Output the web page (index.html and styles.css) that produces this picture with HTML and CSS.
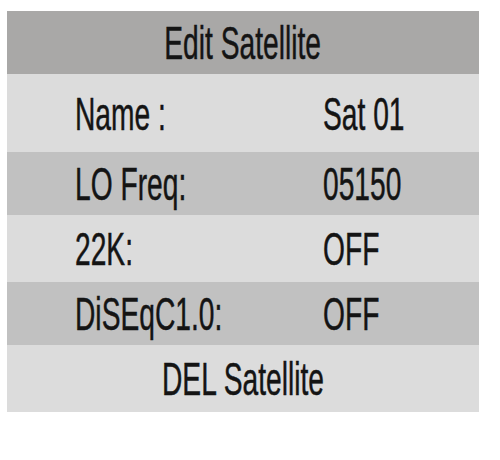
FILE: index.html
```html
<!DOCTYPE html>
<html lang="en">
<head>
    <meta charset="UTF-8" />
    <title>Edit Satellite</title>
    <link rel="stylesheet" href="styles.css">
</head>
<body>
<div class="panel">
    <div class="title"><span class="txt">Edit Satellite</span></div>
    <div class="row light tall">
        <div class="label"><span class="txt">Name :</span></div>
        <div class="value"><span class="txt">Sat 01</span></div>
    </div>
    <div class="row dark">
        <div class="label"><span class="txt">LO Freq:</span></div>
        <div class="value"><span class="txt">05150</span></div>
    </div>
    <div class="row light mid">
        <div class="label"><span class="txt">22K:</span></div>
        <div class="value"><span class="txt">OFF</span></div>
    </div>
    <div class="row dark">
        <div class="label"><span class="txt">DiSEqC1.0:</span></div>
        <div class="value"><span class="txt">OFF</span></div>
    </div>
    <div class="title light mid"><span class="txt">DEL Satellite</span></div>
</div>
</body>
</html>
```

FILE: styles.css
```css
body {
    margin: 0;
    background: #ffffff;
    font-family: "Liberation Sans", Arial, sans-serif;
    color: #141414;
}
.panel {
    width: 472px;
    margin: 11px 0 0 7px;
}
.txt {
    display: inline-block;
    font-size: 47px;
    line-height: 1;
    transform: scaleX(0.6);
    transform-origin: left center;
    white-space: nowrap;
    -webkit-text-stroke: 0.5px #141414;
}
.title {
    height: 63px;
    display: flex;
    align-items: center;
    justify-content: center;
    background-color: #a9a8a7;
}
.title .txt {
    transform-origin: center center;
}
.row {
    height: 63px;
    display: flex;
    align-items: center;
    padding-left: 68px;
}
.label {
    width: 248px;
}
.light {
    background-color: #dcdcdc;
}
.dark {
    background-color: #c1c1c1;
}
.tall {
    height: 78px;
}
.mid {
    height: 67px;
}
```
